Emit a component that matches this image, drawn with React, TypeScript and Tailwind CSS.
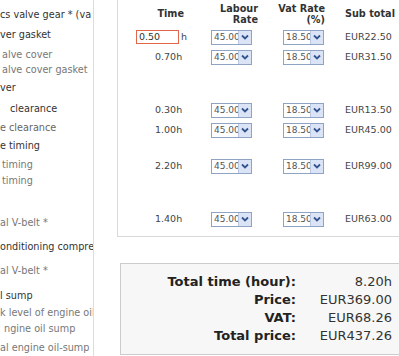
import React from "react";

const listItems = [
  { t: "cs valve gear * (va", cls: "mt-[7px] text-[#333]" },
  { t: "ver gasket", cls: "mt-[4px] text-[#333]" },
  { t: "alve cover", cls: "mt-[4px] pl-[2px] text-[#777]" },
  { t: "alve cover gasket", cls: "mt-[-1px] pl-[2px] text-[#777]" },
  { t: "ver", cls: "mt-[2px] text-[#333]" },
  { t: "clearance", cls: "mt-[5px] pl-[10px] text-[#333]" },
  { t: "e clearance", cls: "mt-[3px] text-[#666]" },
  { t: "e timing", cls: "mt-[2px] text-[#333]" },
  { t: "timing", cls: "mt-[3px] pl-[2px] text-[#777]" },
  { t: "timing", cls: "mt-0 pl-[2px] text-[#777]" },
  { t: "al V-belt *", cls: "mt-[26px] text-[#777]" },
  { t: "onditioning compre", cls: "mt-[8px] text-[#333]" },
  { t: "al V-belt *", cls: "mt-[8px] text-[#777]" },
  { t: "l sump", cls: "mt-[9px] text-[#333]" },
  { t: "k level of engine oil", cls: "mt-[1px] text-[#777]" },
  { t: "ngine oil sump", cls: "mt-0 pl-[4px] text-[#777]" },
  { t: "al engine oil-sump", cls: "mt-[3px] text-[#777]" },
];

// time, sub total, spacing above the row
const rows = [
  { time: "0.50", sub: "EUR22.50", cls: "mt-0", edit: true },
  { time: "0.70h", sub: "EUR31.50", cls: "mt-0" },
  { time: "0.30h", sub: "EUR13.50", cls: "mt-[33px]" },
  { time: "1.00h", sub: "EUR45.00", cls: "mt-0" },
  { time: "2.20h", sub: "EUR99.00", cls: "mt-[16px]" },
  { time: "1.40h", sub: "EUR63.00", cls: "mt-[33px]" },
];

const totals = [
  { label: "Total time (hour):", value: "8.20h" },
  { label: "Price:", value: "EUR369.00" },
  { label: "VAT:", value: "EUR68.26" },
  { label: "Total price:", value: "EUR437.26" },
];

function FakeSelect({ value }: { value: string }) {
  return (
    <div className="flex h-[15px] w-[41px] border border-[#8fa4c4] bg-white">
      <div className="flex-1 overflow-hidden whitespace-nowrap pl-[2px] text-[9px] leading-[13px] text-[#555]">
        {value}
      </div>
      <div className="flex w-[13px] items-center justify-center border-l border-[#b9c7e2] bg-[#dbe4f6]">
        <svg width="8" height="6" viewBox="0 0 8 6">
          <path d="M1 1.5 L4 4.5 L7 1.5" fill="none" stroke="#34548f" strokeWidth="1.8" />
        </svg>
      </div>
    </div>
  );
}

export default function App() {
  return (
    <div className="flex h-[356px] w-[399px] overflow-hidden bg-white font-['DejaVu_Sans',sans-serif]">
      <div className="h-full w-[94px] shrink-0 overflow-hidden border-r border-[#dddddd] text-[9.7px] leading-[16px]">
        {listItems.map((item, i) => (
          <div key={i} className={`whitespace-nowrap ${item.cls}`}>
            {item.t}
          </div>
        ))}
      </div>

      <div className="flex w-[305px] shrink-0 flex-col">
        <div className="ml-[23px] h-[237px] border-b border-l border-[#d9d9d9]">
          <div className="grid h-[27px] grid-cols-[83px_58px_72px_100px] items-center text-[9.7px] font-bold leading-[11px] text-[#333]">
            <div className="pr-[17px] text-right">Time</div>
            <div className="pr-[1px] text-right">
              Labour
              <br />
              Rate
            </div>
            <div className="pr-[6px] text-right">
              Vat Rate
              <br />
              (%)
            </div>
            <div className="pl-[14px]">Sub total</div>
          </div>

          {rows.map((r, i) => (
            <div
              key={i}
              className={`grid h-[20px] grid-cols-[83px_58px_72px_100px] items-center text-[9.5px] text-[#444] ${r.cls}`}
            >
              {r.edit ? (
                <div className="flex items-center pl-[18px]">
                  <div className="h-[14px] w-[43px] border border-[#e2674a] bg-white pl-[2px] text-[9.5px] leading-[12px] text-[#333]">
                    {r.time}
                  </div>
                  <span className="ml-[2px]">h</span>
                </div>
              ) : (
                <div className="pl-[37px]">{r.time}</div>
              )}
              <div className="pl-[10px]">
                <FakeSelect value="45.00" />
              </div>
              <div className="pl-[24px]">
                <FakeSelect value="18.50" />
              </div>
              <div className="pl-[14px]">{r.sub}</div>
            </div>
          ))}
        </div>

        <div className="ml-[26px] mt-[26px] w-[290px] border border-[#cccccc] bg-[#f7f7f7] py-[9px]">
          {totals.map((t) => (
            <div key={t.label} className="flex h-[18px] items-center text-[13px] leading-[18px]">
              <div className="w-[175px] text-right font-bold text-[#222]">{t.label}</div>
              <div className="w-[96px] text-right text-[#333]">{t.value}</div>
            </div>
          ))}
        </div>
      </div>
    </div>
  );
}
